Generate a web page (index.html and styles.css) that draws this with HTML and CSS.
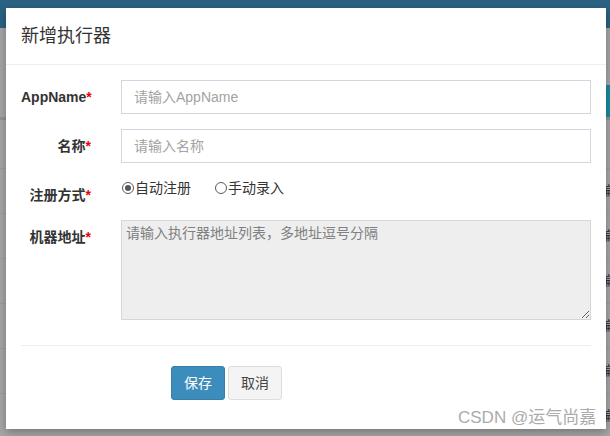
FILE: index.html
```html
<!DOCTYPE html>
<html lang="zh-CN">
<head>
<meta charset="utf-8">
<title>新增执行器</title>
<link rel="stylesheet" href="styles.css">
</head>
<body>
<div class="page">
  <div class="topbar"></div>
  <div class="toolbar"><span class="tool-btn"></span></div>
  <div class="table">
    <div class="thead"></div>
    <div class="trow"><span class="cell">编</span></div>
    <div class="trow"><span class="cell">编</span></div>
    <div class="trow"><span class="cell">编</span></div>
    <div class="trow"><span class="cell">编</span></div>
    <div class="trow"><span class="cell">编</span></div>
    <div class="trow"><span class="cell">编</span></div>
  </div>
</div>

<div class="modal">
  <div class="modal-header">
    <h4 class="modal-title">新增执行器</h4>
  </div>
  <div class="modal-body">
    <form class="form">
      <div class="form-group">
        <label class="control-label">AppName<span class="req">*</span></label>
        <input class="form-control" type="text" placeholder="请输入AppName">
      </div>
      <div class="form-group">
        <label class="control-label">名称<span class="req">*</span></label>
        <input class="form-control" type="text" placeholder="请输入名称">
      </div>
      <div class="form-group">
        <label class="control-label">注册方式<span class="req">*</span></label>
        <div class="radios">
          <label class="radio-item"><input class="radio" type="radio" name="type" checked>自动注册</label>
          <label class="radio-item"><input class="radio" type="radio" name="type">手动录入</label>
        </div>
      </div>
      <div class="form-group">
        <label class="control-label">机器地址<span class="req">*</span></label>
        <textarea class="form-area" placeholder="请输入执行器地址列表，多地址逗号分隔"></textarea>
      </div>
      <hr class="divider">
      <div class="actions">
        <button type="button" class="btn btn-primary">保存</button>
        <button type="button" class="btn btn-default">取消</button>
      </div>
    </form>
  </div>
</div>

<div class="watermark">CSDN @运气尚嘉</div>
</body>
</html>
```

FILE: styles.css
```css
html, body {
  margin: 0;
  padding: 0;
  width: 610px;
  height: 436px;
  overflow: hidden;
}

body {
  background: #a6a6a6;
  font-family: "Liberation Sans", "Noto Sans CJK SC", sans-serif;
  font-size: 14px;
  color: #333;
  position: relative;
}

/* dimmed page behind the modal */
.page {
  width: 610px;
}

.topbar {
  height: 28px;
  background: #2b6283;
}

.toolbar {
  height: 89px;
  display: flex;
  align-items: flex-end;
  padding-left: 606px;
}

.tool-btn {
  display: block;
  width: 4px;
  height: 32px;
  background: #1a8aa6;
}

.table {
  border-top: 3px solid #939393;
}

.thead {
  height: 48px;
  border-bottom: 1px solid #9c9c9c;
}

.trow {
  height: 44px;
  border-bottom: 1px solid #9c9c9c;
  display: flex;
  align-items: center;
}

.cell {
  margin-left: 600px;
  width: 10px;
  overflow: hidden;
  font-size: 13px;
  line-height: 16px;
  color: #2a2a40;
}

/* modal */
.modal {
  position: absolute;
  left: 6px;
  top: 8px;
  width: 600px;
  background: #fff;
  box-shadow: 0 3px 9px rgba(0, 0, 0, 0.3);
}

.modal-header {
  padding: 15px;
  border-bottom: 1px solid #eeeeee;
}

.modal-title {
  margin: 0;
  font-size: 18px;
  font-weight: normal;
  line-height: 26px;
  color: #333;
}

.modal-body {
  padding: 15px 15px 29px;
}

.form {
  margin: 0;
}

.form-group {
  display: grid;
  grid-template-columns: 70px 1fr;
  column-gap: 30px;
  margin-bottom: 15px;
}

.control-label {
  text-align: right;
  font-weight: bold;
  font-size: 14px;
  line-height: 20px;
  padding-top: 7px;
  white-space: nowrap;
  color: #333;
}

.req {
  color: #e00;
}

.form-control {
  display: block;
  box-sizing: border-box;
  width: 100%;
  height: 34px;
  margin: 0;
  padding: 6px 12px;
  border: 1px solid #d2d6de;
  border-radius: 0;
  font-family: inherit;
  font-size: 14px;
  color: #555;
  background: #fff;
  outline: none;
}

.form-control::placeholder {
  color: #a3a3a3;
}

.radios {
  display: flex;
  align-items: flex-start;
  gap: 23px;
  padding-top: 0;
  line-height: 20px;
}

.radio-item {
  display: flex;
  align-items: center;
  font-size: 14px;
  line-height: 20px;
  color: #333;
}

.radio {
  appearance: none;
  -webkit-appearance: none;
  box-sizing: border-box;
  width: 12px;
  height: 12px;
  margin: 0 1px 0 1px;
  border: 1px solid #5a5a5a;
  border-radius: 50%;
  background: #fff;
  position: relative;
}

.radio:checked::after {
  content: "";
  position: absolute;
  left: 2px;
  top: 2px;
  width: 6px;
  height: 6px;
  border-radius: 50%;
  background: #555;
}

.form-area {
  display: block;
  box-sizing: border-box;
  width: 100%;
  height: 100px;
  margin: 0;
  padding: 2px 4px;
  border: 1px solid #d6d6d6;
  border-radius: 0;
  background: #eeeeee;
  font-family: inherit;
  font-size: 14px;
  line-height: 20px;
  color: #555;
  resize: both;
  outline: none;
}

.form-area::placeholder {
  color: #808080;
}

.divider {
  margin: 25px 0 20px;
  border: 0;
  border-top: 1px solid #eeeeee;
  height: 0;
}

.actions {
  display: flex;
  gap: 3px;
  padding-left: 150px;
}

.btn {
  box-sizing: border-box;
  height: 34px;
  padding: 6px 12px;
  font-family: inherit;
  font-size: 14px;
  line-height: 20px;
  border-radius: 3px;
  border: 1px solid transparent;
  cursor: pointer;
}

.btn-primary {
  background: #3c8dbc;
  border-color: #367fa9;
  color: #fff;
}

.btn-default {
  background: #f4f4f4;
  border-color: #dddddd;
  color: #444;
}

.watermark {
  position: absolute;
  left: 458px;
  top: 407px;
  font-size: 17px;
  line-height: 22px;
  color: #ababab;
  white-space: nowrap;
}
```
